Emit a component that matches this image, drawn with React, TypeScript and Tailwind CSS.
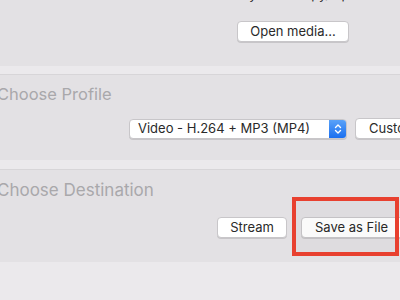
import React from "react";

const font = { fontFamily: "Inter, 'Liberation Sans', sans-serif" };

function MacButton({ children, className = "" }: { children: React.ReactNode; className?: string }) {
  return (
    <div
      className={`shrink-0 h-[21px] flex items-center justify-center bg-white rounded-[4px] border border-[#c8c6c9] shadow-[0_1px_0_rgba(0,0,0,0.12)] text-[13px] text-[#2a2a2a] whitespace-nowrap ${className}`}
    >
      {children}
    </div>
  );
}

export default function App() {
  return (
    <div className="relative w-[400px] h-[300px] overflow-hidden bg-[#ebe9ec]" style={font}>
      {/* Section 1 */}
      <div className="h-[66px] bg-[#e3e1e4] flex flex-col">
        <div className="mt-[-14px] ml-[235px] text-[13px] leading-[16px] text-[#2a2a2a] whitespace-nowrap">
          keyboard copy/mp4
        </div>
        <MacButton className="mt-[19px] ml-[237px] w-[112px]">Open media...</MacButton>
      </div>
      <div className="h-[8px] bg-[#ebe9ec] border-b border-[#d7d5d8] box-content" />

      {/* Section 2 */}
      <div className="h-[85px] bg-[#e3e1e4] flex flex-col">
        <div className="mt-[9px] ml-[-3px] text-[16.5px] leading-[20px] text-[#a9a8ab] whitespace-nowrap">
          Choose Profile
        </div>
        <div className="mt-[14px] flex items-center">
          <div className="shrink-0 ml-[129px] w-[218px] h-[20px] flex bg-white rounded-[4px] border border-[#c8c6c9] shadow-[0_1px_0_rgba(0,0,0,0.12)] overflow-hidden">
            <div className="flex-1 min-w-0 flex items-center pl-[8px] text-[13px] text-[#2a2a2a] whitespace-nowrap">
              Video - H.264 + MP3 (MP4)
            </div>
            <div className="shrink-0 w-[17px] h-full bg-[linear-gradient(to_bottom,#5aa2f8,#1a6ff0)] flex items-center justify-center">
              <svg width="8" height="12" viewBox="0 0 8 12" fill="none" stroke="white" strokeWidth="1.4" strokeLinecap="round" strokeLinejoin="round">
                <path d="M1.5 4.5 L4 2 L6.5 4.5" />
                <path d="M1.5 7.5 L4 10 L6.5 7.5" />
              </svg>
            </div>
          </div>
          <MacButton className="ml-[8px] w-[80px] h-[20px] !justify-start pl-[13px]">Customize</MacButton>
        </div>
      </div>
      <div className="h-[9px] bg-[#ebe9ec] border-b border-[#d7d5d8] box-content" />

      {/* Section 3 */}
      <div className="h-[92px] bg-[#e3e1e4] flex flex-col">
        <div className="mt-[10px] ml-[-3px] text-[17px] leading-[20px] text-[#a9a8ab] whitespace-nowrap">
          Choose Destination
        </div>
        <div className="mt-[17px] flex items-center">
          <MacButton className="ml-[217px] w-[70px] h-[20px]">Stream</MacButton>
          <MacButton className="ml-[14px] w-[110px] h-[20px] !justify-start pl-[13px]">Save as File</MacButton>
        </div>
      </div>

      {/* Red annotation box */}
      <div className="absolute left-[292px] top-[197px] w-[107px] h-[59px] border-[4px] border-[#e8402f] bg-black/[0.02]" />
    </div>
  );
}
